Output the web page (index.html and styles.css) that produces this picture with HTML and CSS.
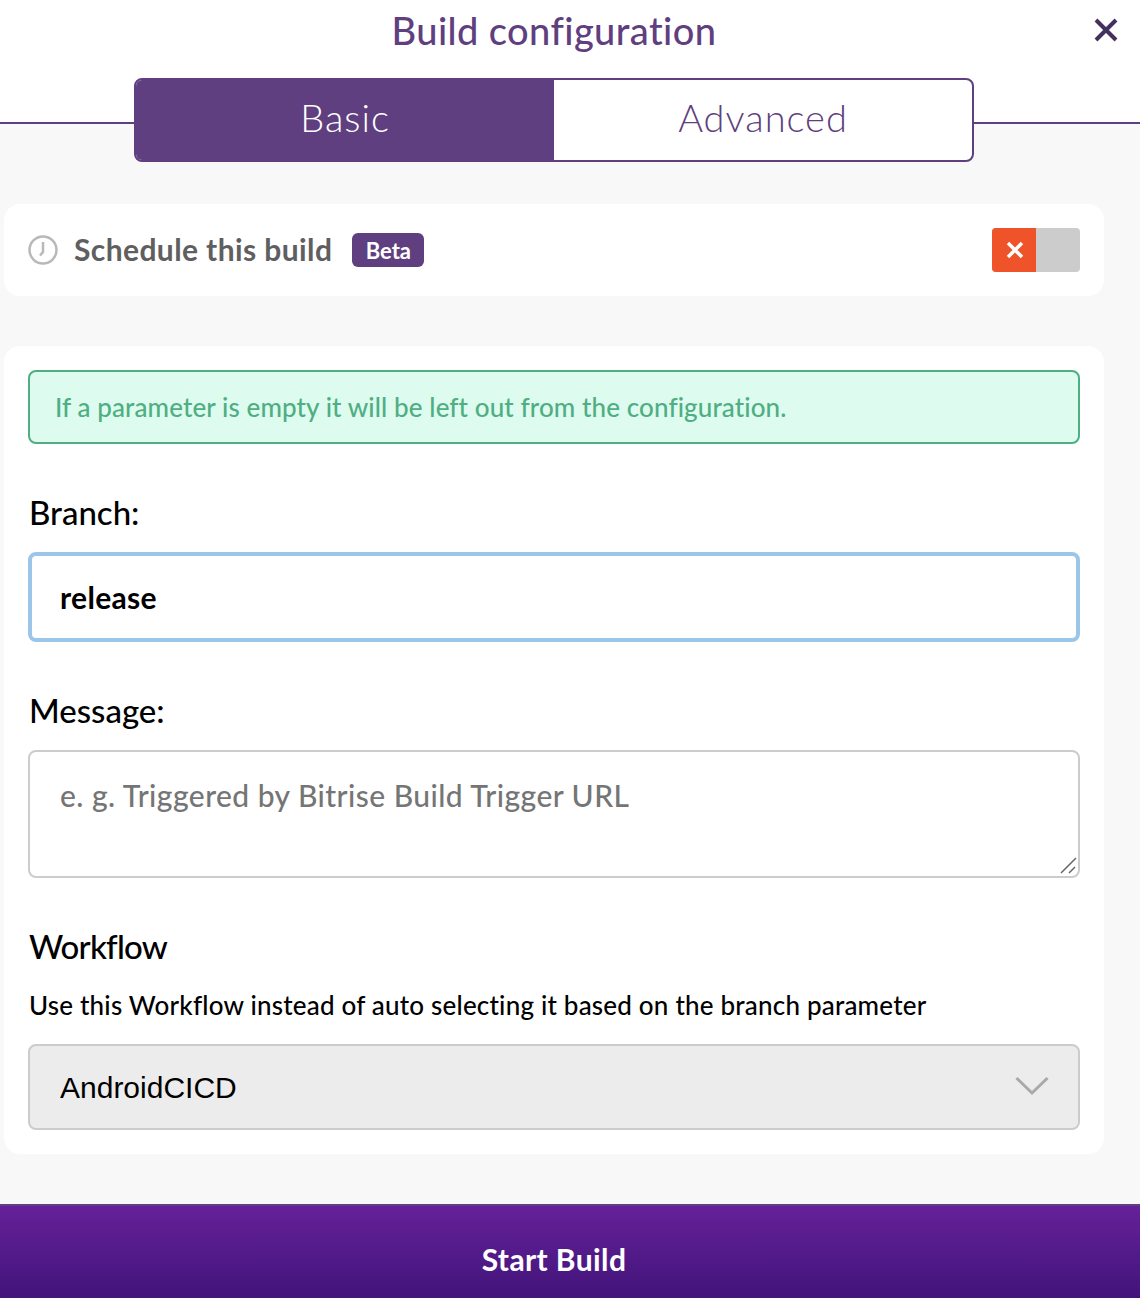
FILE: index.html
```html
<!DOCTYPE html>
<html>
<head>
    <meta charset="utf-8">
    <title>Build configuration</title>
    <link rel="stylesheet" href="styles.css">
</head>
<body>
    <div class="modal">
        <div class="header">
            <h1 class="title">Build configuration</h1>
            <svg class="close" width="24" height="24" viewBox="0 0 24 24">
                <path d="M2 2 L22 22 M22 2 L2 22" />
            </svg>
        </div>
        <div class="tabs">
            <div class="tab tab-active">Basic</div>
            <div class="tab">Advanced</div>
        </div>
        <div class="content">
            <div class="card schedule">
                <svg class="clock" width="30" height="30" viewBox="0 0 30 30">
                    <circle cx="15" cy="15" r="13.5" />
                    <path d="M15 7 V17 L12 20.5" />
                </svg>
                <span class="schedule-label">Schedule this build</span>
                <span class="badge">Beta</span>
                <div class="toggle">
                    <div class="toggle-off">
                        <svg width="20" height="20" viewBox="0 0 20 20">
                            <path d="M3 3 L17 17 M17 3 L3 17" />
                        </svg>
                    </div>
                </div>
            </div>
            <div class="card form">
                <div class="notice">If a parameter is empty it will be left out from the configuration.</div>
                <label class="label label-branch">Branch:</label>
                <input class="input" type="text" value="release">
                <label class="label label-message">Message:</label>
                <div class="textarea-wrap">
                    <textarea class="textarea" placeholder="e. g. Triggered by Bitrise Build Trigger URL"></textarea>
                    <svg class="grip" width="18" height="18" viewBox="0 0 18 18">
                        <path d="M1 16 L16 1 M9 16 L15 10" />
                    </svg>
                </div>
                <label class="label label-workflow">Workflow</label>
                <div class="hint">Use this Workflow instead of auto selecting it based on the branch parameter</div>
                <div class="select-wrap">
                    <select class="select">
                        <option>AndroidCICD</option>
                    </select>
                    <svg class="chevron" width="34" height="20" viewBox="0 0 34 20">
                        <path d="M1.5 2 L17 17 L32.5 2" />
                    </svg>
                </div>
            </div>
        </div>
        <div class="footer">Start Build</div>
    </div>
</body>
</html>
```

FILE: styles.css
```css
:root {
    --purple: #5f3f80;
    --purple-dark: #44305f;
    --page: #f8f8f8;
    --border: #cccccc;
}

* {
    box-sizing: border-box;
}

body {
    margin: 0;
    background: var(--page);
    font-family: Lato, "Noto Sans", sans-serif;
    font-variant-ligatures: none;
    color: #000000;
}

.modal {
    width: 1140px;
    height: 1298px;
    display: flex;
    flex-direction: column;
}

.header {
    height: 124px;
    background: #ffffff;
    border-bottom: 2px solid var(--purple);
    position: relative;
    padding-top: 7px;
    flex-shrink: 0;
}

.title {
    width: 1108px;
    margin: 0;
    text-align: center;
    font-size: 38px;
    line-height: 46px;
    letter-spacing: 0.4px;
    font-weight: 500;
    color: var(--purple);
}

.close {
    position: absolute;
    top: 18px;
    right: 22px;
}

.close path {
    fill: none;
    stroke: var(--purple-dark);
    stroke-width: 4;
}

.tabs {
    width: 840px;
    height: 84px;
    margin: -46px 0 0 134px;
    display: flex;
    background: #ffffff;
    border: 2px solid var(--purple);
    border-radius: 8px;
    overflow: hidden;
    position: relative;
    flex-shrink: 0;
}

.tab {
    width: 418px;
    padding-bottom: 6px;
    display: flex;
    align-items: center;
    justify-content: center;
    font-size: 38px;
    letter-spacing: 1px;
    font-weight: 300;
    color: var(--purple);
}

.tab-active {
    background: var(--purple);
    color: #ffffff;
}

.content {
    flex: 1;
    padding: 42px 36px 0 4px;
}

.card {
    background: #ffffff;
    border-radius: 16px;
}

.schedule {
    height: 92px;
    padding: 0 24px;
    display: flex;
    align-items: center;
}

.clock circle,
.clock path {
    fill: none;
    stroke: #b9b9b9;
    stroke-width: 2.5;
}

.schedule-label {
    margin-left: 16px;
    padding-bottom: 3px;
    font-size: 30px;
    letter-spacing: 0.4px;
    font-weight: 700;
    color: #5f5f5f;
}

.badge {
    margin-left: 20px;
    width: 72px;
    height: 34px;
    display: flex;
    align-items: center;
    justify-content: center;
    background: var(--purple);
    border-radius: 6px;
    color: #ffffff;
    font-size: 22px;
    font-weight: 700;
}

.toggle {
    margin-left: auto;
    width: 88px;
    height: 44px;
    background: var(--border);
    border-radius: 4px;
    overflow: hidden;
}

.toggle-off {
    width: 44px;
    height: 44px;
    padding-left: 2px;
    background: #ef5329;
    display: flex;
    align-items: center;
    justify-content: center;
}

.toggle-off path {
    fill: none;
    stroke: #ffffff;
    stroke-width: 3.5;
}

.form {
    margin-top: 50px;
    height: 808px;
    padding: 24px;
}

.notice {
    height: 74px;
    padding: 0 25px;
    display: flex;
    align-items: center;
    background: #ddfcef;
    border: 2px solid #4fae82;
    border-radius: 8px;
    color: #4fae82;
    font-size: 26px;
    letter-spacing: 0.1px;
    font-weight: 500;
}

.label {
    display: block;
    padding-left: 1px;
    font-size: 33px;
    line-height: 40px;
    font-weight: 500;
}

.label-branch {
    margin-top: 48px;
    margin-bottom: 20px;
}

.label-message {
    margin-top: 48px;
    margin-bottom: 20px;
}

.label-workflow {
    margin-top: 48px;
    letter-spacing: -0.8px;
}

.input {
    display: block;
    width: 100%;
    height: 90px;
    padding: 0 28px;
    background: #ffffff;
    border: 4px solid #9bc5e9;
    border-radius: 8px;
    outline: none;
    font-family: inherit;
    font-variant-ligatures: none;
    font-size: 30px;
    letter-spacing: 0.3px;
    font-weight: 700;
    color: #000000;
}

.textarea-wrap,
.select-wrap {
    position: relative;
}

.textarea {
    display: block;
    width: 100%;
    height: 128px;
    padding: 25px 30px;
    background: #ffffff;
    border: 2px solid var(--border);
    border-radius: 8px;
    outline: none;
    resize: none;
    font-family: inherit;
    font-variant-ligatures: none;
    font-size: 30px;
    letter-spacing: 0.45px;
    font-weight: 500;
    color: #000000;
}

.textarea::placeholder {
    color: #757575;
    opacity: 1;
}

.grip {
    position: absolute;
    right: 2px;
    bottom: 3px;
}

.grip path {
    fill: none;
    stroke: #666666;
    stroke-width: 1.5;
}

.hint {
    margin-top: 23px;
    margin-bottom: 23px;
    padding-left: 1px;
    font-size: 26px;
    line-height: 32px;
    letter-spacing: 0.2px;
    font-weight: 500;
}

.select {
    display: block;
    width: 100%;
    height: 86px;
    padding: 0 30px;
    background: #ececec;
    border: 2px solid var(--border);
    border-radius: 8px;
    outline: none;
    appearance: none;
    font-family: "Liberation Sans", Arial, sans-serif;
    font-size: 30px;
    color: #000000;
}

.chevron {
    position: absolute;
    top: 32px;
    right: 31px;
}

.chevron path {
    fill: none;
    stroke: #a9a9a9;
    stroke-width: 3;
}

.footer {
    height: 94px;
    flex-shrink: 0;
    display: flex;
    align-items: center;
    justify-content: center;
    padding: 13px 32px 0 0;
    background: linear-gradient(#652199, #42147a);
    border-top: 2px solid var(--purple);
    color: #ffffff;
    font-size: 30px;
    letter-spacing: 0.4px;
    font-weight: 700;
}
```
